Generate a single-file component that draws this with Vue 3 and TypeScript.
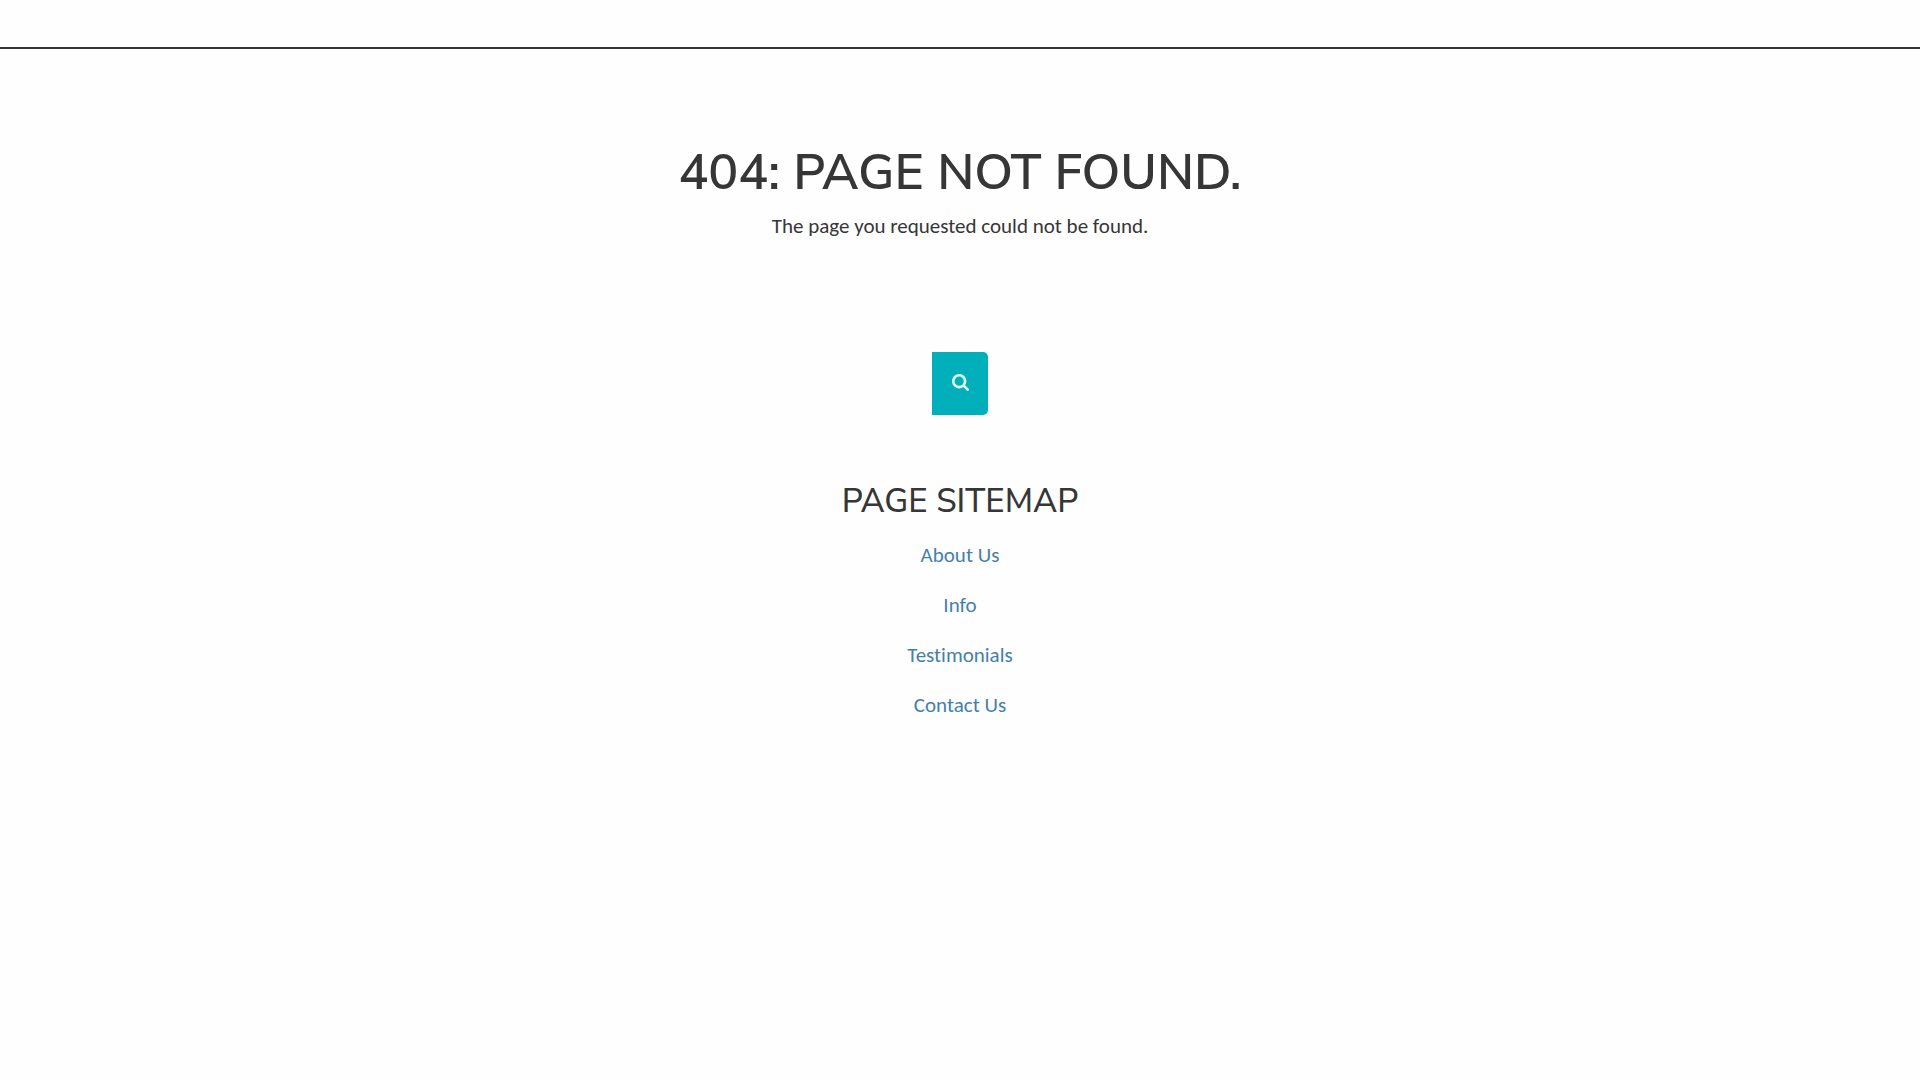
<script setup lang="ts">
interface SiteLink {
  label: string
  href: string
}

const links: SiteLink[] = [
  { label: 'About Us', href: '#about-us' },
  { label: 'Info', href: '#info' },
  { label: 'Testimonials', href: '#testimonials' },
  { label: 'Contact Us', href: '#contact-us' },
]
</script>

<template>
  <div class="page">
    <header class="topbar"></header>
    <main class="content">
      <h1 class="title">404: PAGE NOT FOUND.</h1>
      <p class="message">The page you requested could not be found.</p>
      <form class="search" role="search" @submit.prevent>
        <button class="search-button" type="submit" aria-label="Search">
          <svg class="search-icon" viewBox="0 0 1664 1664" aria-hidden="true">
            <path
              fill="currentColor"
              d="M1152 704q0-185-131.500-316.500t-316.500-131.500-316.500 131.500-131.500 316.500 131.500 316.500 316.500 131.500 316.500-131.500 131.500-316.500zM1664 1536q0 52-38 90t-90 38q-54 0-90-38l-343-342q-179 124-399 124-143 0-273.500-55.500t-225-150-150-225-55.500-273.500 55.500-273.500 150-225 225-150 273.500-55.500 273.500 55.500 225 150 150 225 55.500 273.500q0 220-124 399l343 343q37 37 37 90z"
            />
          </svg>
        </button>
      </form>
      <h2 class="subtitle">PAGE SITEMAP</h2>
      <nav aria-label="Page sitemap">
        <ul class="links">
          <li v-for="link in links" :key="link.label">
            <a :href="link.href">{{ link.label }}</a>
          </li>
        </ul>
      </nav>
    </main>
  </div>
</template>

<style>
body {
  background: #fefefe;
}
</style>

<style scoped>
.page {
  color: #363636;
  font-family: Carlito, Lato, "Liberation Sans", sans-serif;
  font-size: 21px;
  font-variant-ligatures: none;
  line-height: 30px;
}
.topbar {
  height: 47px;
  border-bottom: 2px solid #333;
}
.content {
  display: flex;
  flex-direction: column;
  align-items: center;
  padding: 94px 16px 40px;
  text-align: center;
}
.title,
.subtitle {
  margin: 0;
  font-family: "Nunito Sans", Nunito, Lato, sans-serif;
}
.title {
  font-size: 50px;
  font-weight: 600;
  line-height: 60px;
}
.message {
  margin: 8px 0 111px;
}
.search {
  display: flex;
}
.search-button {
  display: flex;
  align-items: center;
  justify-content: center;
  width: 56px;
  height: 63px;
  padding: 0 0 2px;
  border: 0;
  border-radius: 0 5px 5px 0;
  background: #00afba;
  color: #e0ffff;
  cursor: pointer;
}
.search-icon {
  width: 17px;
  height: 17px;
}
.subtitle {
  margin-top: 67px;
  font-size: 33px;
  font-weight: 500;
  line-height: 40px;
}
.links {
  display: flex;
  flex-direction: column;
  gap: 20px;
  margin: 18px 0 0;
  padding: 0;
  list-style: none;
}
.links a {
  color: #457fad;
  text-decoration: none;
}
</style>
